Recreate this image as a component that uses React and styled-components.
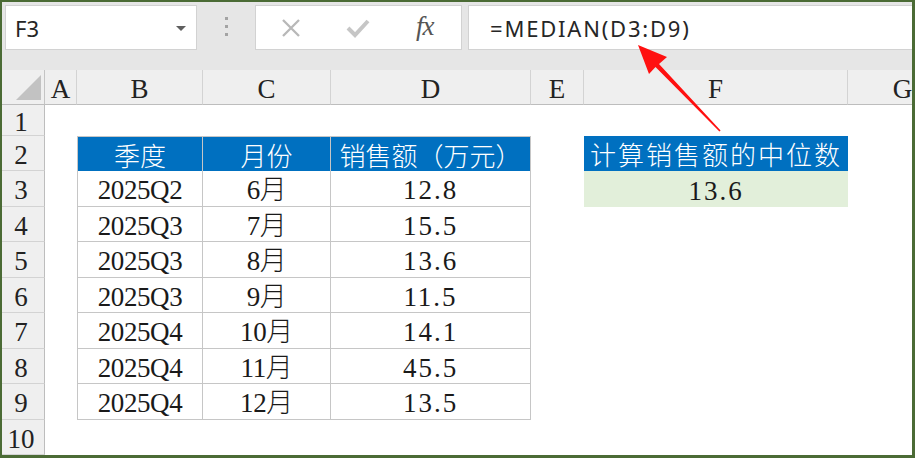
import React from 'react';
import styled, { createGlobalStyle, css } from 'styled-components';

const GlobalStyle = createGlobalStyle`
  html, body { margin: 0; padding: 0; background: #ffffff; }
  body { font-family: "Noto Sans", "Noto Sans CJK SC", sans-serif; }
`;

const COLS = ['A', 'B', 'C', 'D', 'E', 'F', 'G'];

const SALES = [
  ['2025Q2', '6月', '12.8'],
  ['2025Q3', '7月', '15.5'],
  ['2025Q3', '8月', '13.6'],
  ['2025Q3', '9月', '11.5'],
  ['2025Q4', '10月', '14.1'],
  ['2025Q4', '11月', '45.5'],
  ['2025Q4', '12月', '13.5'],
];

const Frame = styled.div`
  position: relative;
  width: 915px;
  height: 458px;
  box-sizing: border-box;
  border-style: solid;
  border-color: #4b6b35;
  border-width: 2px 3px 3px 2px;
  overflow: hidden;
  display: flex;
  flex-direction: column;
`;

const FormulaBar = styled.div`
  height: 68px;
  flex: none;
  background: #e6e6e6;
  display: flex;
  align-items: flex-start;
  padding-top: 3px;
  box-sizing: border-box;
`;

const Box = styled.div`
  height: 45px;
  box-sizing: border-box;
  background: #ffffff;
  border: 1px solid #d2d2d2;
  display: flex;
  align-items: center;
`;

const NameBox = styled(Box)`
  margin-left: 3px;
  width: 192px;
  padding: 0 10px 0 9px;
  justify-content: space-between;
  font-size: 22px;
  color: #262626;
`;

const DropArrow = styled.span`
  width: 0;
  height: 0;
  border-left: 5px solid transparent;
  border-right: 5px solid transparent;
  border-top: 5px solid #5f5f5f;
  margin-top: 2px;
`;

const Grip = styled.div`
  width: 58px;
  height: 45px;
  display: flex;
  flex-direction: column;
  align-items: center;
  justify-content: center;
  gap: 5px;
  padding-bottom: 3px;
  box-sizing: border-box;
`;

const Dot = styled.span`
  width: 3px;
  height: 3px;
  background: #a3a3a3;
`;

const IconBox = styled(Box)`
  width: 207px;
  padding-left: 25px;
  gap: 45px;
`;

const Fx = styled.span`
  font-family: "Liberation Serif", serif;
  font-style: italic;
  font-size: 27px;
  color: #555555;
  letter-spacing: -1px;
  margin-left: 1px;
  margin-top: -2px;
`;

const FormulaInput = styled(Box)`
  flex: 1;
  margin-left: 6px;
  padding-left: 21px;
  border-right: none;
  font-size: 22px;
  letter-spacing: 1.8px;
  color: #262626;
`;

const Sheet = styled.div`
  display: grid;
  grid-template-columns: 43px 32px 126px 128px 200px 53px 264px 110px;
  grid-template-rows: 35px 31px 35px 36px 35px 36px 35px 36px 35px 36px 35px;
  overflow: hidden;
`;

const serif = css`
  font-family: "Liberation Serif", "Noto Sans CJK SC", serif;
  font-size: 27px;
  font-weight: 300;
`;

const kinds = {
  corner: css`
    background: #efefef;
    border-right: 1px solid #c4c4c4;
    border-bottom: 1px solid #bdbdbd;
    align-items: flex-end;
    justify-content: flex-end;
    padding: 0 3px 4px 0;
  `,
  colhead: css`
    ${serif}
    background: #efefef;
    color: #222222;
    border-right: 1px solid #d3d3d3;
    border-bottom: 1px solid #bdbdbd;
    padding-top: 5px;
  `,
  rowhead: css`
    ${serif}
    background: #efefef;
    color: #222222;
    border-right: 1px solid #bdbdbd;
    border-bottom: 1px solid #d3d3d3;
    padding: 5px 4px 0 0;
  `,
  head: css`
    font-family: "Noto Sans CJK SC", sans-serif;
    font-size: 26px;
    font-weight: 300;
    color: #ffffff;
    background: #0070c0;
    border-top: 1px solid #c6c6c6;
    border-right: 1px solid #c6c6c6;
    padding-top: 2px;
  `,
  data: css`
    ${serif}
    color: #1a1a1a;
    letter-spacing: -0.4px;
    border-right: 1px solid #c6c6c6;
    border-bottom: 1px solid #c6c6c6;
    padding-top: 5px;
  `,
  title: css`
    font-family: "Noto Sans CJK SC", sans-serif;
    font-size: 26px;
    font-weight: 300;
    letter-spacing: 2px;
    color: #ffffff;
    background: #0070c0;
    padding-top: 2px;
  `,
  result: css`
    ${serif}
    color: #1a1a1a;
    background: #e2efda;
    padding-top: 5px;
  `,
  blank: css``,
};

const Cell = styled.div`
  display: flex;
  align-items: center;
  justify-content: center;
  box-sizing: border-box;
  white-space: nowrap;
  line-height: 1.1;
  min-width: 0;
  ${({ $kind }) => kinds[$kind]}
  ${({ $first }) => $first && css`border-left: 1px solid #c6c6c6;`}
  ${({ $num }) => $num && css`letter-spacing: 2px;`}
`;

const Arrow = styled.svg`
  position: absolute;
  left: -2px;
  top: -2px;
  width: 915px;
  height: 458px;
  pointer-events: none;
`;

function XIcon() {
  return (
    <svg width="20" height="20" viewBox="0 0 20 20">
      <path d="M2 2 L18 18 M18 2 L2 18" stroke="#b8b8b8" strokeWidth="2.3" fill="none" />
    </svg>
  );
}

function CheckIcon() {
  return (
    <svg width="24" height="20" viewBox="0 0 24 20">
      <path d="M2 10 L9 17 L22 3" stroke="#c6c6c6" strokeWidth="4" fill="none" />
    </svg>
  );
}

function Corner() {
  return (
    <svg width="25" height="25" viewBox="0 0 25 25">
      <polygon points="0,25 25,25 25,0" fill="#c2c2c2" />
    </svg>
  );
}

function cellFor(r, c) {
  const col = COLS[c];
  const inTable = ['B', 'C', 'D'].includes(col);
  if (r === 2 && inTable) {
    const label = { B: '季度', C: '月份', D: '销售额（万元）' }[col];
    return <Cell key={col} $kind="head" $first={col === 'B'}>{label}</Cell>;
  }
  if (r >= 3 && r <= 9 && inTable) {
    const idx = { B: 0, C: 1, D: 2 }[col];
    return (
      <Cell key={col} $kind="data" $first={col === 'B'} $num={col === 'D'}>
        {SALES[r - 3][idx]}
      </Cell>
    );
  }
  if (r === 2 && col === 'F') return <Cell key={col} $kind="title">计算销售额的中位数</Cell>;
  if (r === 3 && col === 'F') return <Cell key={col} $kind="result" $num>13.6</Cell>;
  return <Cell key={col} $kind="blank" />;
}

export default function App() {
  const rowNums = [1, 2, 3, 4, 5, 6, 7, 8, 9, 10];
  return (
    <Frame>
      <GlobalStyle />
      <FormulaBar>
        <NameBox>
          F3
          <DropArrow />
        </NameBox>
        <Grip>
          <Dot />
          <Dot />
          <Dot />
        </Grip>
        <IconBox>
          <XIcon />
          <CheckIcon />
          <Fx>fx</Fx>
        </IconBox>
        <FormulaInput>=MEDIAN(D3:D9)</FormulaInput>
      </FormulaBar>

      <Sheet>
        <Cell $kind="corner">
          <Corner />
        </Cell>
        {COLS.map((c) => (
          <Cell key={c} $kind="colhead">{c}</Cell>
        ))}
        {rowNums.map((r) => (
          <React.Fragment key={r}>
            <Cell $kind="rowhead">{r}</Cell>
            {COLS.map((_, c) => cellFor(r, c))}
          </React.Fragment>
        ))}
      </Sheet>

      <Arrow viewBox="0 0 915 458">
        <polygon
          points="638,45 667,57 659,64 720.6,130.4 719.4,131.6 655.5,67 649,74"
          fill="#ff1010"
        />
      </Arrow>
    </Frame>
  );
}
